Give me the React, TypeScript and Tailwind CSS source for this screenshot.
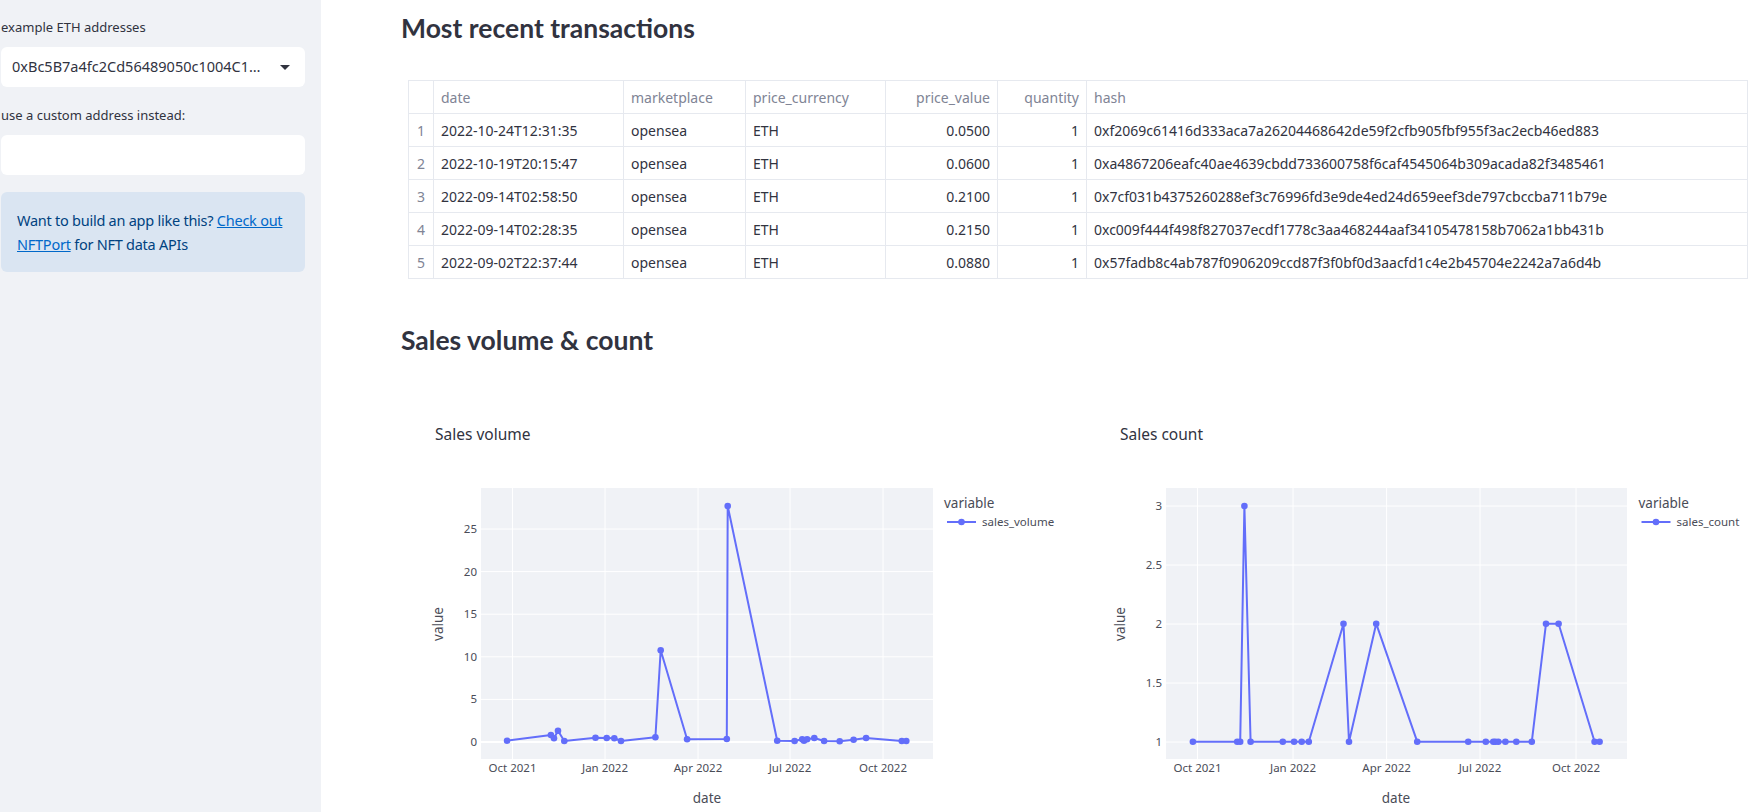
const rows = [
  ["2022-10-24T12:31:35", "opensea", "ETH", "0.0500", "1", "0xf2069c61416d333aca7a26204468642de59f2cfb905fbf955f3ac2ecb46ed883"],
  ["2022-10-19T20:15:47", "opensea", "ETH", "0.0600", "1", "0xa4867206eafc40ae4639cbdd733600758f6caf4545064b309acada82f3485461"],
  ["2022-09-14T02:58:50", "opensea", "ETH", "0.2100", "1", "0x7cf031b4375260288ef3c76996fd3e9de4ed24d659eef3de797cbccba711b79e"],
  ["2022-09-14T02:28:35", "opensea", "ETH", "0.2150", "1", "0xc009f444f498f827037ecdf1778c3aa468244aaf34105478158b7062a1bb431b"],
  ["2022-09-02T22:37:44", "opensea", "ETH", "0.0880", "1", "0x57fadb8c4ab787f0906209ccd87f3f0bf0d3aacfd1c4e2b45704e2242a7a6d4b"],
]

const volumePts: [number, number][] = [
  [507.1, 739.7], [550.9, 734], [554, 737.3], [558, 729.7], [564.3, 740], [595.5, 736.7],
  [606.7, 737], [614.3, 737.3], [621, 740], [655.4, 736.3], [660.7, 649.3], [687.1, 738.3],
  [726.8, 738], [727.7, 505], [777.2, 739.7], [794.6, 740], [802.2, 738.3], [804, 739.7],
  [807.1, 738.3], [814.3, 737], [824.1, 740], [839.7, 740.3], [853.6, 738.7], [866.1, 737],
  [901.8, 740], [906.3, 740],
]

const countPts: [number, number][] = [
  [1192.9, 740.7], [1237.2, 740.7], [1240.2, 740.7], [1244.4, 505], [1250.6, 740.7],
  [1282.8, 740.7], [1294.1, 740.7], [1301.7, 740.7], [1308.8, 740.7], [1343.5, 622.7],
  [1349, 740.7], [1376.2, 622.7], [1417.2, 740.7], [1468.2, 740.7], [1485.8, 740.7],
  [1493.3, 740.7], [1495.4, 740.7], [1498.3, 740.7], [1505.4, 740.7], [1516.3, 740.7],
  [1531.8, 740.7], [1546, 622.7], [1558.6, 622.7], [1594.6, 740.7], [1599.6, 740.7],
]

type ChartProps = {
  viewX: number
  title: string
  plot: { x1: number; x2: number }
  xTicks: number[]
  yTicks: { y: number; label: string }[]
  yLabelX: number
  zeroY?: number
  valueX: number
  dateX: number
  legendX: number
  legendName: string
  pts: [number, number][]
}

function Chart(p: ChartProps) {
  const months = ["Oct 2021", "Jan 2022", "Apr 2022", "Jul 2022", "Oct 2022"]
  const y1 = 487
  const y2 = 758
  return (
    <svg
      width={669}
      height={450}
      viewBox={`${p.viewX} 370 669 450`}
      className="block shrink-0"
      style={{ fontFamily: '"Noto Sans", sans-serif' }}
    >
      <text x={p.viewX + 34} y={438.5} fontSize={15.5} fill="#31333f">{p.title}</text>
      <rect x={p.plot.x1} y={y1} width={p.plot.x2 - p.plot.x1} height={y2 - y1} fill="#f0f2f6" />
      {p.xTicks.map((x) => (
        <line key={x} x1={x} x2={x} y1={y1} y2={y2} stroke="#fff" strokeWidth={1} />
      ))}
      {p.yTicks.map((t) => (
        <line key={t.label} x1={p.plot.x1} x2={p.plot.x2} y1={t.y} y2={t.y} stroke="#fff" strokeWidth={p.zeroY === t.y ? 2 : 1} />
      ))}
      {p.yTicks.map((t) => (
        <text key={t.label} x={p.yLabelX} y={t.y + 4} fontSize={11.5} fill="#4a4c57" textAnchor="end">{t.label}</text>
      ))}
      {p.xTicks.map((x, i) => (
        <text key={x} x={x} y={771} fontSize={11.5} fill="#4a4c57" textAnchor="middle">{months[i]}</text>
      ))}
      <text x={p.dateX} y={802} fontSize={13.5} fill="#4a4c57" textAnchor="middle">date</text>
      <text x={p.valueX} y={623} fontSize={13.5} fill="#4a4c57" textAnchor="middle" transform={`rotate(-90 ${p.valueX} 623)`} dy={4.5}>value</text>
      <polyline points={p.pts.map((q) => q.join(",")).join(" ")} fill="none" stroke="#636efa" strokeWidth={2} strokeLinejoin="round" />
      {p.pts.map((q, i) => (
        <circle key={i} cx={q[0]} cy={q[1]} r={3.3} fill="#636efa" />
      ))}
      <text x={p.legendX} y={507} fontSize={13.5} fill="#4a4c57">variable</text>
      <line x1={p.legendX + 3} x2={p.legendX + 32} y1={521} y2={521} stroke="#636efa" strokeWidth={2} />
      <circle cx={p.legendX + 17.5} cy={521} r={3.3} fill="#636efa" />
      <text x={p.legendX + 38} y={525} fontSize={11.5} fill="#4a4c57">{p.legendName}</text>
    </svg>
  )
}

export default function App() {
  return (
    <div className="flex h-screen w-full overflow-hidden bg-white text-[#31333f]" style={{ fontFamily: '"Noto Sans", sans-serif' }}>
      <aside className="h-full w-[321px] shrink-0 bg-[#f0f2f6] pl-px pr-4 pt-[17px]">
        <div className="text-[13px] leading-5 text-[#31333f]">example ETH addresses</div>
        <div className="mt-[10px] flex h-10 items-center rounded-md bg-white pl-[11px] pr-[15px]">
          <span className="flex-1 whitespace-nowrap text-[14.5px]">0xBc5B7a4fc2Cd56489050c1004C1…</span>
          <svg width="10" height="5" viewBox="0 0 10 5">
            <path d="M0 0h10L5 5z" fill="#31333f" />
          </svg>
        </div>
        <div className="mt-[18px] text-[13px] leading-5">use a custom address instead:</div>
        <div className="mt-[10px] h-10 rounded-md bg-white" />
        <div className="mt-[17px] rounded-md bg-[#dae5f2] py-4 pl-4 pr-2 text-[14.5px] leading-6 tracking-[-0.25px] text-[#004280]">
          <span className="whitespace-nowrap">
            Want to build an app like this?{" "}
            <a className="text-[#0068c9] underline" href="#">Check out</a>
          </span>
          <br />
          <a className="text-[#0068c9] underline" href="#">NFTPort</a> for NFT data APIs
        </div>
      </aside>

      <main className="flex-1 pl-[80px] pr-2 pt-[11px]">
        <h2 className="h-[34px] text-[26.5px] font-bold leading-[34px]" style={{ fontFamily: 'Lato, sans-serif' }}>
          Most recent transactions
        </h2>
        <table className="ml-[7px] mt-[35px] w-[1340px] table-fixed border-collapse text-[14px]">
          <colgroup>
            <col className="w-[25px]" />
            <col className="w-[190px]" />
            <col className="w-[122px]" />
            <col className="w-[140px]" />
            <col className="w-[112px]" />
            <col className="w-[89px]" />
            <col />
          </colgroup>
          <thead>
            <tr className="h-[33px] text-[#808495]">
              <th className="border border-[#e6e9ef] font-normal" />
              <th className="border border-[#e6e9ef] px-[7px] text-left font-normal">date</th>
              <th className="border border-[#e6e9ef] px-[7px] text-left font-normal">marketplace</th>
              <th className="border border-[#e6e9ef] px-[7px] text-left font-normal">price_currency</th>
              <th className="border border-[#e6e9ef] px-[7px] text-right font-normal">price_value</th>
              <th className="border border-[#e6e9ef] px-[7px] text-right font-normal">quantity</th>
              <th className="border border-[#e6e9ef] px-[7px] text-left font-normal">hash</th>
            </tr>
          </thead>
          <tbody>
            {rows.map((r, i) => (
              <tr key={i} className="h-[33px]">
                <td className="border border-[#e6e9ef] text-center text-[#808495]">{i + 1}</td>
                <td className="border border-[#e6e9ef] px-[7px]">{r[0]}</td>
                <td className="border border-[#e6e9ef] px-[7px]">{r[1]}</td>
                <td className="border border-[#e6e9ef] px-[7px]">{r[2]}</td>
                <td className="border border-[#e6e9ef] px-[7px] text-right">{r[3]}</td>
                <td className="border border-[#e6e9ef] px-[7px] text-right">{r[4]}</td>
                <td className="border border-[#e6e9ef] px-[7px] whitespace-nowrap">{r[5]}</td>
              </tr>
            ))}
          </tbody>
        </table>
        <h2 className="mt-[44px] h-[34px] text-[26.5px] font-bold leading-[34px]" style={{ fontFamily: 'Lato, sans-serif' }}>
          Sales volume &amp; count
        </h2>
        <div className="mt-[14px] flex gap-4">
          <Chart
            viewX={401}
            title="Sales volume"
            plot={{ x1: 481, x2: 933 }}
            xTicks={[512.5, 605, 698, 790, 883]}
            yTicks={[
              { y: 741, label: "0" },
              { y: 698.4, label: "5" },
              { y: 655.8, label: "10" },
              { y: 613.2, label: "15" },
              { y: 570.6, label: "20" },
              { y: 528, label: "25" },
            ]}
            zeroY={741}
            yLabelX={477}
            valueX={438}
            dateX={707}
            legendX={944}
            legendName="sales_volume"
            pts={volumePts}
          />
          <Chart
            viewX={1086}
            title="Sales count"
            plot={{ x1: 1166, x2: 1627 }}
            xTicks={[1197.5, 1293, 1386.6, 1480, 1576]}
            yTicks={[
              { y: 741, label: "1" },
              { y: 682, label: "1.5" },
              { y: 623, label: "2" },
              { y: 564, label: "2.5" },
              { y: 505, label: "3" },
            ]}
            yLabelX={1162}
            valueX={1120}
            dateX={1396}
            legendX={1638.5}
            legendName="sales_count"
            pts={countPts}
          />
        </div>
      </main>
    </div>
  )
}
